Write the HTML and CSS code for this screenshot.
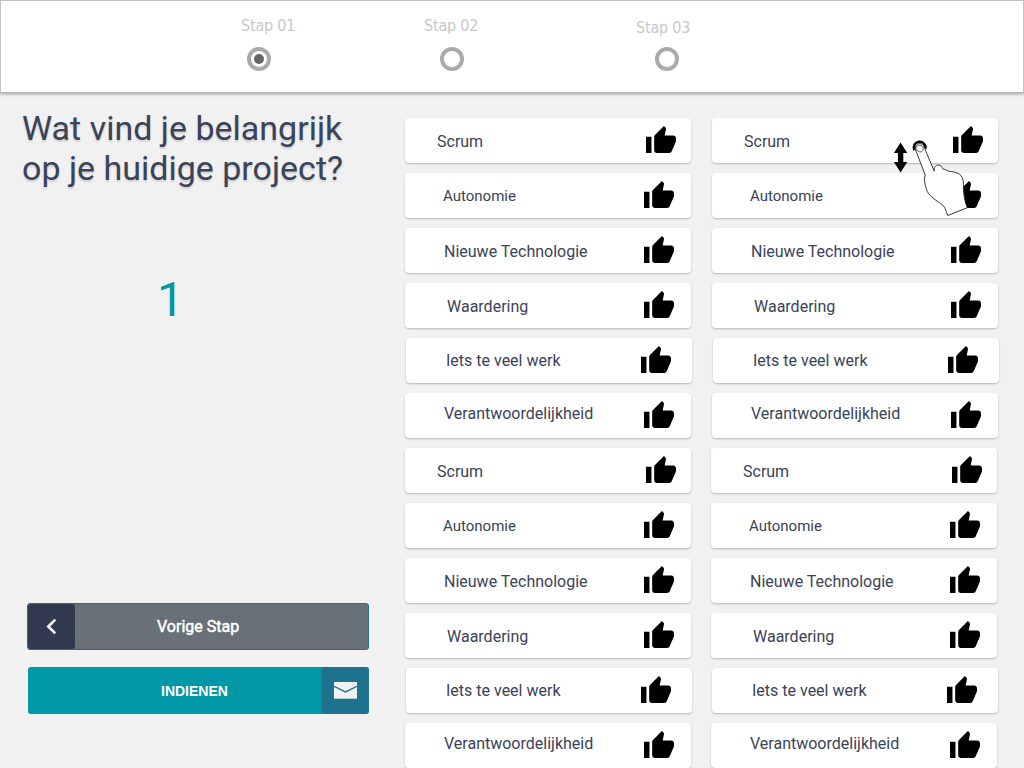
FILE: index.html
```html
<!DOCTYPE html>
<html lang="nl">
<head>
<meta charset="utf-8">
<title>Wat vind je belangrijk</title>
<link rel="stylesheet" href="styles.css">
</head>
<body>
<svg width="0" height="0" class="defs">
  <symbol id="thumb" viewBox="1 1 22 20" preserveAspectRatio="none">
    <path d="M1 21h4V9H1v12zm22-11c0-1.1-.9-2-2-2h-6.310l.95-4.570.03-.32c0-.41-.17-.79-.44-1.060L14.170 1 7.590 7.590C7.220 7.950 7 8.450 7 9v10c0 1.100.9 2 2 2h9c.83 0 1.540-.5 1.840-1.220l3.020-7.050c.09-.23.14-.47.14-.73v-2z"/>
  </symbol>
</svg>
<header class="steps">
  <div class="step step-1"><span class="step-label">Stap 01</span><span class="radio checked"></span></div>
  <div class="step step-2"><span class="step-label">Stap 02</span><span class="radio"></span></div>
  <div class="step step-3"><span class="step-label">Stap 03</span><span class="radio"></span></div>
</header>
<main class="content">
  <section class="panel">
    <h1 class="question"><span class="line-1">Wat vind je belangrijk</span><br><span class="line-2">op je huidige project?</span></h1>
    <div class="count">1</div>
    <div class="actions">
      <button class="btn back"><span class="btn-icon"><svg width="11" height="17" viewBox="0 0 11 17"><path d="M9.3 1.6 2.3 8.5l7 6.9" fill="none" stroke="#f1f1f1" stroke-width="2.7"/></svg></span><span class="btn-text">Vorige Stap</span></button>
      <button class="btn submit"><span class="btn-text">INDIENEN</span><span class="btn-icon"><svg width="23" height="17" viewBox="0 0 23 17"><path d="M0 0h23v17H0z" fill="#f1f1f1"/><path d="M0 4.3 11.5 10 23 4.3" fill="none" stroke="#1f728d" stroke-width="1.4"/><path d="M0 16.5h23" stroke="#a9cdd4"/></svg></span></button>
    </div>
  </section>
  <div class="column left">
    <div class="card scrum"><span>Scrum</span><svg class="thumb"><use href="#thumb"/></svg></div>
    <div class="card autonomie"><span>Autonomie</span><svg class="thumb"><use href="#thumb"/></svg></div>
    <div class="card tech"><span>Nieuwe Technologie</span><svg class="thumb"><use href="#thumb"/></svg></div>
    <div class="card waardering"><span>Waardering</span><svg class="thumb"><use href="#thumb"/></svg></div>
    <div class="card werk"><span>Iets te veel werk</span><svg class="thumb"><use href="#thumb"/></svg></div>
    <div class="card verantw"><span>Verantwoordelijkheid</span><svg class="thumb"><use href="#thumb"/></svg></div>
    <div class="card scrum"><span>Scrum</span><svg class="thumb"><use href="#thumb"/></svg></div>
    <div class="card autonomie"><span>Autonomie</span><svg class="thumb"><use href="#thumb"/></svg></div>
    <div class="card tech"><span>Nieuwe Technologie</span><svg class="thumb"><use href="#thumb"/></svg></div>
    <div class="card waardering"><span>Waardering</span><svg class="thumb"><use href="#thumb"/></svg></div>
    <div class="card werk"><span>Iets te veel werk</span><svg class="thumb"><use href="#thumb"/></svg></div>
    <div class="card verantw"><span>Verantwoordelijkheid</span><svg class="thumb"><use href="#thumb"/></svg></div>
  </div>
  <div class="column right">
    <div class="group first">
      <div class="card scrum"><span>Scrum</span><svg class="thumb"><use href="#thumb"/></svg></div>
      <div class="card autonomie"><span>Autonomie</span><svg class="thumb"><use href="#thumb"/></svg></div>
      <div class="card tech"><span>Nieuwe Technologie</span><svg class="thumb"><use href="#thumb"/></svg></div>
      <div class="card waardering"><span>Waardering</span><svg class="thumb"><use href="#thumb"/></svg></div>
      <div class="card werk"><span>Iets te veel werk</span><svg class="thumb"><use href="#thumb"/></svg></div>
      <div class="card verantw"><span>Verantwoordelijkheid</span><svg class="thumb"><use href="#thumb"/></svg></div>
    </div>
    <div class="group">
      <div class="card scrum"><span>Scrum</span><svg class="thumb"><use href="#thumb"/></svg></div>
      <div class="card autonomie"><span>Autonomie</span><svg class="thumb"><use href="#thumb"/></svg></div>
      <div class="card tech"><span>Nieuwe Technologie</span><svg class="thumb"><use href="#thumb"/></svg></div>
      <div class="card waardering"><span>Waardering</span><svg class="thumb"><use href="#thumb"/></svg></div>
      <div class="card werk"><span>Iets te veel werk</span><svg class="thumb"><use href="#thumb"/></svg></div>
      <div class="card verantw"><span>Verantwoordelijkheid</span><svg class="thumb"><use href="#thumb"/></svg></div>
    </div>
  </div>
</main>
<svg class="gesture" width="80" height="80" viewBox="890 138 80 80">
  <path d="M900.600 142.500l6.700 10.500h-4v9h4l-6.700 10.500-6.700-10.500h4v-9h-4z"/>
  <path d="M914.300 150.300A5.900 5.900 0 1 1 925.400 148.800" fill="none" stroke="#000" stroke-width="2.500"/>
  <path d="M916 151C914.300 147 916 143.800 919.500 143.600c2.500 0 4 1.400 4.700 3.600L929.500 160l4.800 11.200C934.200 168.500 934.200 167.500 935.300 166.500c1.200-1.600 4-2 5.600-.6 1.200 1 1.500 2.200 2.400 3.300 1.600.2 3.400.6 5 2 4 .3 8.200 1.100 11 2.800 2.800 2.200 3.700 4.700 4 7.700.4 4-.2 8 .5 11.600.5 5 1.500 9.500 3.500 14.400L947.700 215.500c-1.500-3.500-2.200-7.500-4.500-10-3.500-3-7-4.700-10.200-7.500-3.500-3-5.300-5-6.500-8.500-1.200-3.300-1.800-7-2.200-10.500l.9-4z" fill="#fff" stroke="#222" stroke-width=".9"/>
  <path d="M916.300 150.800c-1-3.400.7-5.600 3.200-5.600 2.700.1 4 2.300 3.700 4.300-.3 1.700-1.500 2.500-3.100 2.500-1.500 0-2.600-1-3.100-2.300" fill="none" stroke="#333" stroke-width=".8"/>
</svg>
</body>
</html>
```

FILE: styles.css
```css
* { box-sizing: border-box; }
body {
  margin: 0;
  width: 1024px;
  height: 768px;
  overflow: hidden;
  background: #f1f1f1;
  font-family: Roboto, "Liberation Sans", sans-serif;
  color: #3a4357;
}
.defs { display: block; }
.steps {
  display: flex;
  height: 93px;
  background: #fff;
  border: 1px solid #c4c4c4;
  border-bottom-color: #b5b5b5;
  box-shadow: 0 1px 3px rgba(0, 0, 0, .35);
}
.step { width: 60px; }
.step-1 { margin-left: 240px; }
.step-2 { margin-left: 123px; }
.step-3 { margin-left: 152px; }
.step-label {
  display: block;
  margin-top: 14px;
  height: 22px;
  font: 16px/22px "DejaVu Sans Condensed", "DejaVu Sans", sans-serif;
  font-stretch: condensed;
  letter-spacing: -.2px;
  color: #c8c8c8;
  white-space: nowrap;
}
.step-3 .step-label { margin-top: 16px; }
.radio {
  display: flex;
  align-items: center;
  justify-content: center;
  width: 24px;
  height: 24px;
  margin: 10px 0 0 6px;
  border: 4px solid #aaa;
  border-radius: 50%;
}
.step-2 .radio { margin-left: 16px; }
.step-3 .radio { margin: 8px 0 0 19px; }
.checked::after {
  content: "";
  width: 10px;
  height: 10px;
  border-radius: 50%;
  background: #666;
}
.content { display: flex; height: 675px; }
.panel { width: 405px; padding: 15px 0 0 22px; }
.question {
  margin: 0;
  font-size: 34px;
  line-height: 40px;
  font-weight: 400;
  white-space: nowrap;
  text-shadow: 0 2px 2px rgba(0, 0, 0, .14);
}
.count {
  margin: 84px 0 0 135px;
  height: 56px;
  font-size: 48px;
  line-height: 56px;
  color: #0097a7;
}
.actions { margin: 275px 0 0 5px; display: flex; flex-direction: column; gap: 17px; width: 342px; }
.btn {
  display: flex;
  align-items: stretch;
  height: 47px;
  padding: 0;
  border: 0;
  border-radius: 3px;
  color: #fff;
  overflow: hidden;
}
.btn-text { display: flex; align-items: center; }
.btn-icon { display: flex; align-items: center; justify-content: center; width: 47px; border-radius: 3px; }
.back { background: #697077; border: 1px solid #1f728d; font: 16px Roboto, sans-serif; -webkit-text-stroke: .5px #fff; }
.back .btn-icon { background: #323a4f; }
.back .btn-text { margin-left: 82px; }
.submit { margin-left: 1px; background: #0097a7; font: bold 14px "Liberation Sans", sans-serif; }
.submit .btn-text { width: 294px; padding-left: 133px; }
.submit .btn-icon { background: #1f728d; }
.column { display: flex; flex-direction: column; gap: 10px; width: 306px; padding-top: 25px; }
.group { display: flex; flex-direction: column; gap: 10px; }
.group.first { margin-left: 1px; }
.card {
  display: flex;
  flex: none;
  width: 286px;
  height: 45px;
  padding: 8px 15px 0 39px;
  border-radius: 4px;
  background: #fff;
  box-shadow: 0 1px 2px rgba(0, 0, 0, .24);
  justify-content: space-between;
  font-size: 16px;
  line-height: 30px;
  white-space: nowrap;
}
.card span { margin-top: 1px; }
.thumb { width: 30px; height: 27px; margin-right: 2px; }
.scrum { padding-left: 32px; }
.scrum .thumb { margin-right: 0; }
.autonomie { padding-left: 38px; font-size: 15px; }
.autonomie span, .werk span { margin-top: 0; }
.waardering { padding-left: 42px; }
.werk { margin-left: 1px; padding-left: 40px; }
.werk .thumb { margin-right: 6px; }
.verantw span { margin-top: -2px; }
.gesture { position: absolute; left: 890px; top: 138px; }
```
